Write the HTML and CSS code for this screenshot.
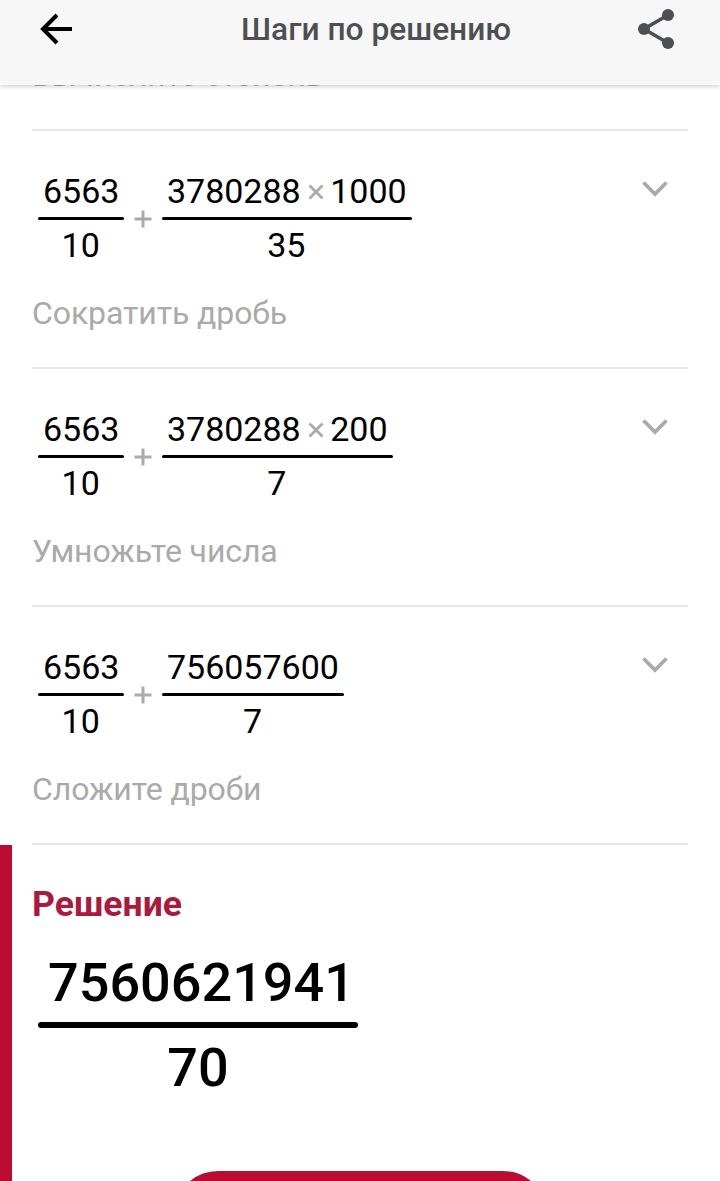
FILE: index.html
```html
<!DOCTYPE html>
<html lang="ru">
<head>
<meta charset="utf-8">
<title>Шаги по решению</title>
<link rel="stylesheet" href="styles.css">
</head>
<body>
<div class="screen">
  <header class="header">
    <svg class="back" width="34" height="34" viewBox="0 0 34 34"><path d="M33 17H4M18 3L4 17L18 31" fill="none" stroke="#000" stroke-width="4"/></svg>
    <h1 class="title">Шаги по решению</h1>
    <svg class="share" width="38" height="42" viewBox="0 0 38 42"><path d="M31 7L7 21L31 35" fill="none" stroke="#4d4f53" stroke-width="3.6"/><g fill="#4d4f53"><circle cx="31" cy="7" r="6"/><circle cx="7" cy="21" r="6"/><circle cx="31" cy="35" r="6"/></g></svg>
  </header>
  <main class="steps">
    <section class="step step-first"><p class="label">Вычислите степень</p></section>
    <section class="step">
      <div class="row">
        <div class="fraction"><span class="num">6563</span><span class="bar"></span><span class="den">10</span></div>
        <svg class="plus" width="18" height="18" viewBox="0 0 18 18"><path d="M9 .5V17.5M.5 9H17.5" stroke="#aaa" stroke-width="3"/></svg>
        <div class="fraction"><span class="num">3780288<svg class="times" width="16" height="16" viewBox="0 0 16 16"><path d="M1.5 1.5L14.5 14.5M14.5 1.5L1.5 14.5" stroke="#aaa" stroke-width="2.8"/></svg>1000</span><span class="bar"></span><span class="den">35</span></div>
        <svg class="chevron" width="28" height="18" viewBox="0 0 28 18"><path d="M2.5 2.5L14 14L25.5 2.5" fill="none" stroke="#aaa" stroke-width="3.8"/></svg>
      </div>
      <p class="label">Сократить дробь</p>
    </section>
    <section class="step">
      <div class="row">
        <div class="fraction"><span class="num">6563</span><span class="bar"></span><span class="den">10</span></div>
        <svg class="plus" width="18" height="18" viewBox="0 0 18 18"><path d="M9 .5V17.5M.5 9H17.5" stroke="#aaa" stroke-width="3"/></svg>
        <div class="fraction"><span class="num">3780288<svg class="times" width="16" height="16" viewBox="0 0 16 16"><path d="M1.5 1.5L14.5 14.5M14.5 1.5L1.5 14.5" stroke="#aaa" stroke-width="2.8"/></svg>200</span><span class="bar"></span><span class="den">7</span></div>
        <svg class="chevron" width="28" height="18" viewBox="0 0 28 18"><path d="M2.5 2.5L14 14L25.5 2.5" fill="none" stroke="#aaa" stroke-width="3.8"/></svg>
      </div>
      <p class="label">Умножьте числа</p>
    </section>
    <section class="step">
      <div class="row">
        <div class="fraction"><span class="num">6563</span><span class="bar"></span><span class="den">10</span></div>
        <svg class="plus" width="18" height="18" viewBox="0 0 18 18"><path d="M9 .5V17.5M.5 9H17.5" stroke="#aaa" stroke-width="3"/></svg>
        <div class="fraction"><span class="num">756057600</span><span class="bar"></span><span class="den">7</span></div>
        <svg class="chevron" width="28" height="18" viewBox="0 0 28 18"><path d="M2.5 2.5L14 14L25.5 2.5" fill="none" stroke="#aaa" stroke-width="3.8"/></svg>
      </div>
      <p class="label">Сложите дроби</p>
    </section>
  </main>
  <section class="solution">
    <h2 class="solution-title">Решение</h2>
    <div class="fraction result"><span class="num">7560621941</span><span class="bar"></span><span class="den">70</span></div>
    <div class="action"></div>
  </section>
</div>
</body>
</html>
```
FILE: styles.css
```css
* { box-sizing: border-box; }
body { margin: 0; background: #fff; font-family: Roboto, "Liberation Sans", sans-serif; overflow: hidden; }
h1, h2, p { margin: 0; }
svg { display: block; flex: none; }

.screen { display: flex; flex-direction: column; height: 1181px; overflow: hidden; background: #fff; }

.header {
  position: relative;
  z-index: 1;
  flex: none;
  display: flex;
  align-items: flex-start;
  height: 85px;
  padding: 8px 45px 0 39px;
  background: #f7f7f7;
  box-shadow: 0 1px 5px rgba(0, 0, 0, .22);
}
.back { margin-top: 4px; }
.title { margin: 4px 0 0 168px; font-size: 31.7px; line-height: 36px; font-weight: 500; color: #4d4f53; white-space: nowrap; }
.share { margin-left: auto; }

.steps { flex: none; margin-top: -29px; padding: 0 32px; }
.step { height: 238px; padding-top: 40px; border-bottom: 2px solid #e6e6e6; }
.step-first { height: 75px; padding-top: 0; }
.row { display: flex; align-items: flex-start; padding-left: 6px; }
.label { margin-top: 29px; font-size: 32px; line-height: 38px; letter-spacing: -.1px; color: #aaa; white-space: nowrap; }
.step-first .label { margin-top: 0; }

.fraction { display: inline-flex; flex-direction: column; align-items: center; font-size: 34px; line-height: 40px; color: #000; }
.num { display: flex; align-items: center; padding: 0 5px; }
.den { display: block; padding-right: 1px; }
.bar { align-self: stretch; height: 3px; margin: 6px 0 5px; border-radius: 2px; background: #000; }
.plus { margin: 39px 10px 0 9.5px; }
.times { margin: 2px 6.5px 0 7px; }
.chevron { margin: 9px 19.5px 0 auto; }

.solution { flex: 1; display: flex; flex-direction: column; align-items: flex-start; min-height: 0; padding: 38px 0 0 20px; border-left: 12px solid #bb0b31; }
.solution-title { font-size: 35.6px; line-height: 42px; font-weight: 700; color: #ab1a3c; }
.result { margin: 26px 0 0 6px; font-size: 54px; line-height: 64px; font-weight: 500; }
.result .num { padding: 0 3px 0 10px; }
.result .bar { height: 6px; margin: 7px 0 8px; border-radius: 3px; }
.result .den { padding-right: 0; }
.action { flex: none; width: 373px; height: 88px; margin: 71px 0 0 142px; border-radius: 44px; background: #bd0b30; border: 2px solid #a5163a; }
```
